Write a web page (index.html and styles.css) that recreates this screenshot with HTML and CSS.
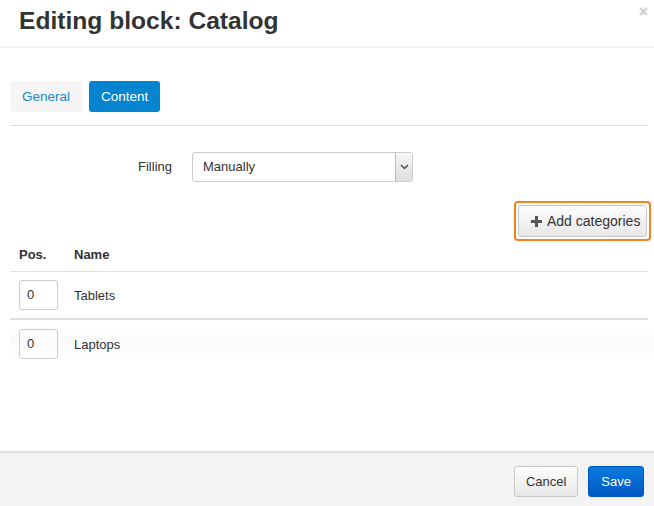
FILE: index.html
```html
<!DOCTYPE html>
<html>
<head>
<meta charset="utf-8">
<link rel="stylesheet" href="styles.css">
</head>
<body>
<div class="modal">
  <div class="header">
    <h1 class="title">Editing block: Catalog</h1>
    <span class="close">&times;</span>
  </div>
  <div class="body">
    <div class="tabs">
      <span class="tab">General</span>
      <span class="tab active">Content</span>
    </div>
    <div class="form-row">
      <label class="label">Filling</label>
      <div class="select">
        <span class="select-value">Manually</span>
        <span class="select-arrow">
          <svg width="9" height="6" viewBox="0 0 9 6"><path d="M1 1 L4.5 4.5 L8 1" fill="none" stroke="#444" stroke-width="1.4"/></svg>
        </span>
      </div>
    </div>
    <div class="actions">
      <div class="highlight">
        <button class="btn">
          <svg width="11" height="11" viewBox="0 0 11 11"><path d="M4 0h3v4h4v3H7v4H4V7H0V4h4z" fill="#555"/></svg>
          Add categories
        </button>
      </div>
    </div>
    <div class="table">
      <div class="thead">
        <span class="col-pos">Pos.</span>
        <span class="col-name">Name</span>
      </div>
      <div class="row">
        <span class="col-pos"><span class="pos-input">0</span></span>
        <span class="col-name">Tablets</span>
      </div>
      <div class="row row-last">
        <span class="col-pos"><span class="pos-input">0</span></span>
        <span class="col-name">Laptops</span>
      </div>
    </div>
  </div>
  <div class="footer">
    <button class="btn btn-cancel">Cancel</button>
    <button class="btn btn-primary">Save</button>
  </div>
</div>
</body>
</html>
```
FILE: styles.css
```css
* { box-sizing: border-box; }
html, body { margin: 0; padding: 0; background: #fff; }
body {
  font-family: "Liberation Sans", Arial, sans-serif;
  font-size: 13px;
  color: #333;
  width: 654px;
  height: 506px;
  overflow: hidden;
}
.modal {
  display: flex;
  flex-direction: column;
  height: 506px;
}
.header {
  position: relative;
  height: 48px;
  border-bottom: 2px solid #f2f2f2;
  padding: 7px 19px 0;
}
.title {
  margin: 0;
  font-size: 24.6px;
  font-weight: bold;
  line-height: 28px;
  color: #333;
}
.close {
  position: absolute;
  right: 6px;
  top: 4px;
  font-size: 16px;
  font-weight: bold;
  color: #ccc;
  line-height: 16px;
}
.body {
  flex: 1;
  padding: 33px 6px 0 10px;
}
.tabs {
  display: flex;
  gap: 7px;
  padding-bottom: 13px;
  border-bottom: 1px solid #ddd;
}
.tab {
  display: inline-block;
  height: 31px;
  line-height: 31px;
  padding: 0 12px;
  border-radius: 3px;
  background: #f5f5f5;
  color: #1a88cc;
  font-size: 13.5px;
}
.tab.active {
  background: #0585cf;
  color: #fff;
}
.form-row {
  display: flex;
  align-items: center;
  margin-top: 25px;
  height: 31px;
}
.label {
  width: 182px;
  text-align: right;
  padding-right: 20px;
  color: #333;
}
.select {
  display: flex;
  width: 221px;
  height: 30px;
  border: 1px solid #ccc;
  border-radius: 3px;
  align-items: stretch;
  overflow: hidden;
}
.select-value {
  flex: 1;
  line-height: 28px;
  padding-left: 10px;
}
.select-arrow {
  width: 17px;
  border-left: 1px solid #bbb;
  background: linear-gradient(#f6f6f6, #dedede);
  display: flex;
  align-items: center;
  justify-content: center;
}
.actions {
  display: flex;
  justify-content: flex-end;
  margin-top: 19px;
  margin-right: -3px;
}
.highlight {
  border: 2px solid #f5821f;
  border-radius: 4px;
  padding: 2px;
}
.btn {
  font-family: "Liberation Sans", Arial, sans-serif;
  font-size: 13px;
  color: #333;
  height: 32px;
  padding: 0 12px;
  border: 1px solid #c8c8c8;
  border-radius: 3px;
  background: linear-gradient(#fdfdfd, #e8e8e8);
  display: inline-flex;
  align-items: center;
  gap: 5px;
}
.actions .btn { width: 129px; padding: 0 0 0 12px; font-size: 14px; }
.table { margin-top: 0; }
.thead, .row {
  display: flex;
  align-items: center;
}
.thead {
  height: 31px;
  align-items: flex-start;
  padding-top: 6px;
  font-weight: bold;
  font-size: 13px;
  border-bottom: 1px solid #e2e2e2;
}
.row {
  height: 48px;
  border-bottom: 2px solid #dedede;
}
.row-last {
  border-bottom: none;
  margin-right: -6px;
  background: linear-gradient(#fff 0, #fff 8px, #fafafa 20px, #fdfdfd 30px, #fff 40px);
}
.col-pos { width: 64px; padding-left: 9px; }
.col-name { flex: 1; font-size: 13px; }
.pos-input {
  display: block;
  width: 39px;
  height: 30px;
  border: 1px solid #ccc;
  border-radius: 3px;
  line-height: 28px;
  padding-left: 7px;
  font-size: 13px;
}
.footer {
  height: 55px;
  border-top: 2px solid #e0e0e0;
  background: #f3f3f3;
  display: flex;
  justify-content: flex-end;
  align-items: center;
  gap: 10px;
  padding: 3px 10px 0 0;
}
.footer .btn { height: 31px; }
.btn-cancel { padding: 0 11px; }
.btn-primary {
  background: linear-gradient(#0a7be0, #0057c2);
  border-color: #0058c0;
  color: #fff;
}
```
